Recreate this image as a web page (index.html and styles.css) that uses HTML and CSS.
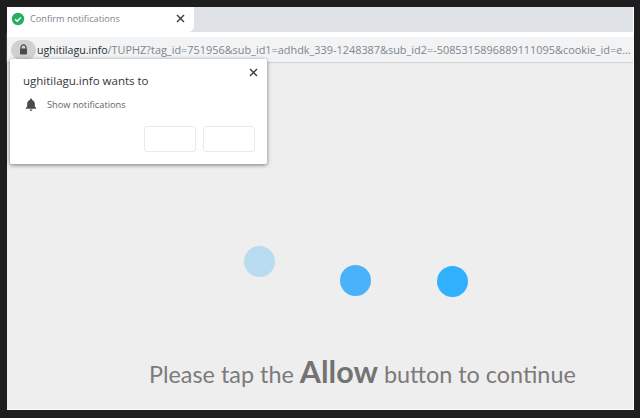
FILE: index.html
```html
<!DOCTYPE html>
<html lang="en">
<head>
    <meta charset="UTF-8">
    <title>Confirm notifications</title>
    <link rel="stylesheet" href="styles.css">
</head>
<body>
<div class="window">
    <div class="tabstrip">
        <div class="tab">
            <svg class="tab-icon" width="14" height="14" viewBox="0 0 14 14">
                <circle cx="7" cy="7" r="6.2" fill="#27ae60"/>
                <path d="M4.2 7.2l2 2 3.6-3.8" fill="none" stroke="#fff" stroke-width="1.4"/>
            </svg>
            <span class="tab-title">Confirm notifications</span>
            <svg class="tab-close" width="9" height="9" viewBox="0 0 9 9">
                <path d="M1 1l7 7M8 1l-7 7" stroke="#3a3a3a" stroke-width="1.4"/>
            </svg>
        </div>
    </div>
    <div class="toolbar">
        <div class="omnibox">
            <div class="lock-chip">
                <svg width="9" height="11" viewBox="0 0 9 11">
                    <path d="M2 5V3.4a2.5 2.5 0 0 1 5 0V5" fill="none" stroke="#4a4a4a" stroke-width="1.2"/>
                    <rect x="1" y="4.5" width="7" height="6" rx="0.8" fill="#4a4a4a"/>
                </svg>
            </div>
            <div class="url"><span class="host">ughitilagu.info</span>/TUPHZ?tag_id=751956&amp;sub_id1=adhdk_339-1248387&amp;sub_id2=-5085315896889111095&amp;cookie_id=e...</div>
        </div>
    </div>
    <div class="content">
        <div class="popup">
            <svg class="popup-close" width="9" height="9" viewBox="0 0 9 9">
                <path d="M1 1l7 7M8 1l-7 7" stroke="#3a3a3a" stroke-width="1.4"/>
            </svg>
            <div class="popup-title">ughitilagu.info wants to</div>
            <div class="popup-row">
                <svg width="12" height="13" viewBox="0 0 12 13">
                    <path d="M6 0.6a1 1 0 0 1 1 1v.5c1.8.5 2.8 2 2.8 3.9v2.6l1.4 1.5v.6H.8v-.6l1.4-1.5V6c0-1.900 1-3.400 2.800-3.900v-.5a1 1 0 0 1 1-1z" fill="#4a4a4a"/>
                    <path d="M4.600 11.500h2.800a1.400 1.400 0 0 1-2.800 0z" fill="#4a4a4a"/>
                </svg>
                <span>Show notifications</span>
            </div>
            <div class="popup-buttons">
                <div class="popup-btn"></div>
                <div class="popup-btn"></div>
            </div>
        </div>
        <div class="dots">
            <div class="dot dot-faded"></div>
            <div class="dot dot-mid"></div>
            <div class="dot dot-full"></div>
        </div>
        <p class="message">Please tap the <strong>Allow</strong> button to continue</p>
    </div>
</div>
</body>
</html>
```

FILE: styles.css
```css
* {
    margin: 0;
    padding: 0;
    box-sizing: border-box;
}
body {
    width: 640px;
    height: 418px;
    overflow: hidden;
    background-color: #1e1e1e;
    padding: 7px 6px 8px 7px;
    font-family: 'Open Sans', sans-serif;
}
.window {
    height: 403px;
    display: flex;
    flex-direction: column;
    background: #eeeeee;
    border-right: 1px solid #fff;
    border-bottom: 1px solid #fff;
}
.tabstrip {
    height: 25px;
    background: #dee1e6;
    flex-shrink: 0;
}
.tab {
    width: 187px;
    height: 25px;
    background: #fff;
    border-radius: 0 0 6px 0;
    display: flex;
    align-items: center;
    padding: 0 9px 2px 4px;
}
.tab-icon {
    flex-shrink: 0;
}
.tab-title {
    margin-left: 5px;
    font-size: 9.2px;
    color: #80868b;
    flex: 1;
    white-space: nowrap;
}
.toolbar {
    height: 30px;
    background: #fff;
    padding-top: 5px;
    box-shadow: 0 1px 1px #d4d4d4;
    flex-shrink: 0;
}
.omnibox {
    height: 25px;
    background: #f1f3f4;
    display: flex;
    align-items: center;
    padding-left: 4px;
}
.lock-chip {
    width: 25px;
    height: 20px;
    border-radius: 10px;
    background: #cfd0d2;
    display: flex;
    align-items: center;
    justify-content: center;
    flex-shrink: 0;
}
.url {
    margin-left: 1px;
    font-size: 10.9px;
    color: #80868b;
    white-space: nowrap;
}
.host {
    font-size: 10.6px;
    color: #2b2c2f;
}
.content {
    flex: 1;
    position: relative;
    display: flex;
    flex-direction: column;
    align-items: flex-start;
}
.popup {
    position: absolute;
    left: 3px;
    top: -3px;
    width: 257px;
    height: 105px;
    background: #fff;
    border-radius: 2px;
    box-shadow: 0 1px 4px rgba(0, 0, 0, 0.5);
    padding: 14px 12px 0 13px;
}
.popup-close {
    position: absolute;
    right: 9px;
    top: 9px;
}
.popup-title {
    font-size: 11.5px;
    color: #35363a;
}
.popup-row {
    display: flex;
    align-items: center;
    gap: 10px;
    margin-top: 10px;
    padding-left: 2px;
    font-size: 9.2px;
    color: #5f6368;
}
.popup-buttons {
    display: flex;
    justify-content: flex-end;
    gap: 7px;
    margin-top: 15px;
}
.popup-btn {
    width: 52px;
    height: 26px;
    border: 1px solid #eaeaea;
    border-radius: 3px;
    background: #fff;
}
.dots {
    display: flex;
    align-items: flex-start;
    gap: 65.5px;
    margin-top: 184px;
    margin-left: 236.5px;
}
.dot {
    width: 31px;
    height: 31px;
    border-radius: 50%;
}
.dot-faded {
    background: #b9dcf1;
}
.dot-mid {
    background: #49b2fb;
    margin-top: 19px;
}
.dot-full {
    background: #31b0fd;
    margin-top: 20px;
}
.message {
    margin-top: 56px;
    margin-left: 142px;
    font-family: 'Lato', sans-serif;
    font-size: 23.4px;
    color: #7b7b7b;
    white-space: nowrap;
}
.message strong {
    font-size: 30.5px;
    font-weight: 700;
    color: #737373;
}
```
